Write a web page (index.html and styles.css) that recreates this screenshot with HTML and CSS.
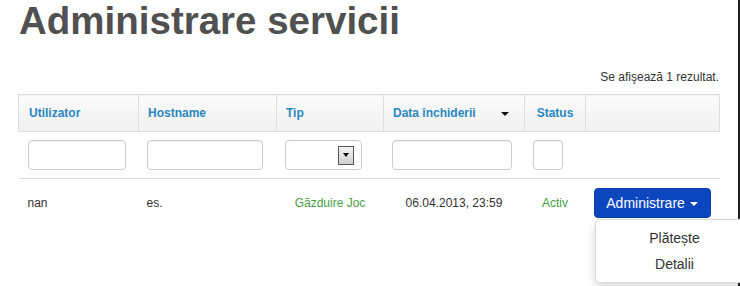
FILE: index.html
```html
<!DOCTYPE html>
<html lang="ro">
<head>
    <meta charset="UTF-8">
    <meta name="viewport" content="width=device-width, initial-scale=1.0">
    <title>Administrare servicii</title>
    <link rel="stylesheet" href="styles.css">
</head>
<body>
    <div class="page">
        <h1>Administrare servicii</h1>

        <div class="summary">Se afişează 1 rezultat.</div>

        <table class="grid">
            <thead>
                <tr>
                    <th class="col-user">Utilizator</th>
                    <th class="col-host">Hostname</th>
                    <th class="col-type">Tip</th>
                    <th class="col-date sorted">Data închiderii <span class="sort-caret"></span></th>
                    <th class="col-status center">Status</th>
                    <th class="col-actions"></th>
                </tr>
                <tr class="filters">
                    <td><input type="text" class="f-user"></td>
                    <td><input type="text" class="f-host"></td>
                    <td>
                        <div class="fake-select">
                            <span class="select-btn"><span class="select-arrow"></span></span>
                        </div>
                    </td>
                    <td><input type="text" class="f-date"></td>
                    <td><input type="text" class="f-status"></td>
                    <td></td>
                </tr>
            </thead>
            <tbody>
                <tr class="data-row">
                    <td>nan</td>
                    <td>es.</td>
                    <td class="center green">Găzduire Joc</td>
                    <td class="center">06.04.2013, 23:59</td>
                    <td class="center green">Activ</td>
                    <td class="center actions">
                        <div class="btn-group">
                            <button class="btn-primary">Administrare <span class="caret"></span></button>
                            <ul class="dropdown-menu">
                                <li><a href="#">Plătește</a></li>
                                <li><a href="#">Detalii</a></li>
                            </ul>
                        </div>
                    </td>
                </tr>
            </tbody>
        </table>
    </div>
</body>
</html>
```

FILE: styles.css
```css
* {
    box-sizing: border-box;
    margin: 0;
    padding: 0;
}

html {
    overflow: hidden;
}

body {
    background-color: #fff;
    color: #333;
    font-family: 'Liberation Sans', Arial, sans-serif;
    font-size: 12px;
}

.page {
    width: 740px;
    height: 286px;
    padding-left: 18px;
    box-shadow: inset -2px 0 0 #222;
}

h1 {
    font-size: 38.5px;
    line-height: 42px;
    font-weight: bold;
    color: #505050;
    padding-left: 1px;
}

.summary {
    width: 701px;
    margin-top: 27px;
    line-height: 16px;
    text-align: right;
    font-size: 12px;
    color: #333;
}

.grid {
    width: 701px;
    margin-top: 9px;
    border-collapse: collapse;
    table-layout: fixed;
}

.grid th {
    height: 37px;
    padding: 0 9px;
    text-align: left;
    font-size: 12px;
    font-weight: bold;
    color: #2a87bf;
    background: linear-gradient(#fbfbfb, #f0f0f0);
    border: 1px solid #ddd;
}

.grid th:first-child {
    padding-left: 10px;
}

.col-user { width: 120px; }
.col-host { width: 138px; }
.col-type { width: 107px; }
.col-date { width: 141px; }
.col-status { width: 61px; }
.col-actions { width: 134px; }

.grid th.center,
.grid td.center {
    text-align: center;
}

.sorted {
    position: relative;
}

.sort-caret {
    position: absolute;
    right: 15px;
    top: 17px;
    width: 0;
    height: 0;
    border-left: 4px solid transparent;
    border-right: 4px solid transparent;
    border-top: 4px solid #111;
}

.filters td {
    height: 47px;
    padding: 0 8px;
    border-bottom: 1px solid #ddd;
}

.filters td:first-child {
    padding-left: 9px;
}

input {
    display: block;
    height: 30px;
    border: 1px solid #ccc;
    border-radius: 4px;
    box-shadow: inset 0 1px 1px rgba(0,0,0,0.06);
    background: #fff;
}

.f-user { width: 98px; }
.f-host { width: 116px; }
.f-date { width: 120px; }
.f-status { width: 30px; }

.fake-select {
    width: 77px;
    height: 30px;
    border: 1px solid #ccc;
    border-radius: 4px;
    background: #fff;
    display: flex;
    justify-content: flex-end;
    align-items: center;
    padding-right: 7px;
}

.select-btn {
    width: 16px;
    height: 19px;
    border: 1px solid #555;
    background: linear-gradient(#f4f4f4, #cfcfcf);
    display: flex;
    align-items: center;
    justify-content: center;
}

.select-arrow {
    width: 0;
    height: 0;
    border-left: 3px solid transparent;
    border-right: 3px solid transparent;
    border-top: 4px solid #000;
}

.data-row td {
    height: 48px;
    padding: 0 10px;
    vertical-align: top;
    padding-top: 17px;
    font-size: 12px;
    color: #333;
    white-space: nowrap;
}

.data-row td:first-child {
    padding-left: 9px;
}

.data-row td:nth-child(2) {
    padding-left: 8px;
}

.data-row td.actions {
    padding: 9px 10px 0 8px;
}

.green {
    color: #4aa047 !important;
}

.btn-group {
    position: relative;
    display: inline-block;
}

.btn-primary {
    display: block;
    width: 117px;
    height: 30px;
    background-color: #0c46bf;
    border: 1px solid #0a3ea9;
    border-radius: 4px;
    color: #fff;
    font-family: 'Liberation Sans', Arial, sans-serif;
    font-size: 14px;
    cursor: pointer;
}

.caret {
    display: inline-block;
    width: 0;
    height: 0;
    margin-left: 1px;
    vertical-align: middle;
    border-left: 4px solid transparent;
    border-right: 4px solid transparent;
    border-top: 4px solid #fff;
}

.dropdown-menu {
    position: absolute;
    top: 100%;
    left: 1px;
    z-index: 10;
    min-width: 160px;
    margin-top: 1px;
    padding: 5px 0;
    list-style: none;
    background: #fff;
    border: 1px solid rgba(0,0,0,0.15);
    border-radius: 5px;
    box-shadow: 0 4px 10px rgba(0,0,0,0.15);
}

.dropdown-menu a {
    display: block;
    line-height: 26px;
    text-align: center;
    font-size: 14px;
    color: #333;
    text-decoration: none;
}
```
